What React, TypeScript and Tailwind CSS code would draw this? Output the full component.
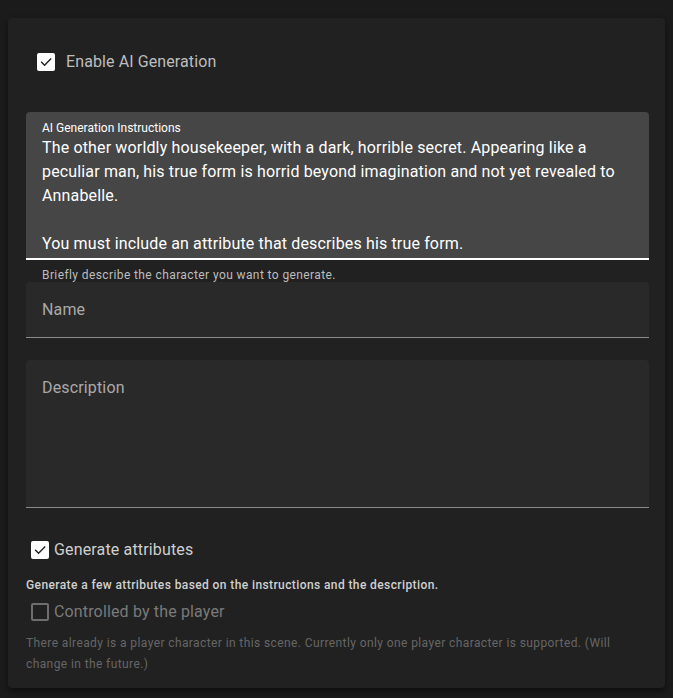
import React from "react";

function Check({ size }: { size: number }) {
  return (
    <div
      className="flex items-center justify-center rounded-[2px] bg-white"
      style={{ width: size, height: size }}
    >
      <svg width={size - 4} height={size - 4} viewBox="0 0 24 24" fill="none">
        <path d="M4.5 12.5l5 5L20 7" stroke="#212121" strokeWidth="2.4" strokeLinecap="square" />
      </svg>
    </div>
  );
}

export default function App() {
  return (
    <div
      className="min-h-[698px] bg-[#1b1b1b] px-2 pt-[18px]"
      style={{ fontFamily: "Roboto, 'Noto Sans', sans-serif" }}
    >
      <div className="h-[670px] rounded-[4px] bg-[#212121] pl-[18px] pr-[16px] pt-[20px] shadow-[0_3px_6px_rgba(0,0,0,0.5)]">
        <div className="flex h-[48px] items-center pl-[11px]">
          <Check size={18} />
          <span className="ml-[11px] text-[16px] leading-6 tracking-[0.1px] text-[#bdbdbd]">
            Enable AI Generation
          </span>
        </div>

        <div className="mt-[26px] h-[148px] rounded-t-[4px] border-b-2 border-white bg-[#464646] px-4 pt-[8px]">
          <div className="text-[12px] leading-[16px] text-white">AI Generation Instructions</div>
          <div className="whitespace-pre-wrap text-[16px] leading-6 tracking-[0.15px] text-white">
            {"The other worldly housekeeper, with a dark, horrible secret. Appearing like a peculiar man, his true form is horrid beyond imagination and not yet revealed to Annabelle.\n\nYou must include an attribute that describes his true form."}
          </div>
        </div>
        <div className="h-[22px] px-4 pt-[7px] text-[12px] leading-4 tracking-[0.4px] text-[#bdbdbd]">
          Briefly describe the character you want to generate.
        </div>

        <div className="flex h-[56px] items-center rounded-t-[4px] border-b border-[#8a8a8a] bg-[#292929] px-4">
          <span className="text-[16px] leading-6 tracking-[0.15px] text-[#a9a9a9]">Name</span>
        </div>

        <div className="mt-[22px] h-[148px] rounded-t-[4px] border-b border-[#8a8a8a] bg-[#292929] px-4 pt-[16px]">
          <span className="text-[16px] leading-6 tracking-[0.15px] text-[#a9a9a9]">Description</span>
        </div>

        <div className="mt-[33px] flex h-[18px] items-center pl-[5px]">
          <Check size={18} />
          <span className="ml-[5px] text-[16px] leading-6 tracking-[0.15px] text-[#cfcfcf]">
            Generate attributes
          </span>
        </div>
        <div className="mt-[18px] text-[12px] font-medium leading-4 tracking-[0.4px] text-[#d0d0d0]">
          Generate a few attributes based on the instructions and the description.
        </div>
        <div className="mt-[10px] flex h-[18px] items-center pl-[5px]">
          <div className="h-[18px] w-[18px] rounded-[2px] border-2 border-[#6e6e6e]" />
          <span className="ml-[5px] text-[16px] leading-6 tracking-[0.15px] text-[#7a7a7a]">
            Controlled by the player
          </span>
        </div>
        <div className="mt-[12px] text-[12px] leading-[21px] tracking-[0.4px] text-[#666666]">
          There already is a player character in this scene. Currently only one player character is supported. (Will change in the future.)
        </div>
      </div>
    </div>
  );
}
